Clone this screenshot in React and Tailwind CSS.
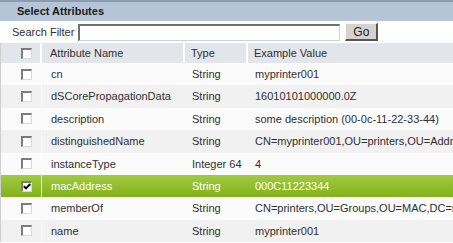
import React from "react";

const rows = [
  ["cn", "String", "myprinter001"],
  ["dSCorePropagationData", "String", "16010101000000.0Z"],
  ["description", "String", "some description (00-0c-11-22-33-44)"],
  ["distinguishedName", "String", "CN=myprinter001,OU=printers,OU=Addresses,DC=example,DC=com"],
  ["instanceType", "Integer 64", "4"],
  ["macAddress", "String", "000C11223344"],
  ["memberOf", "String", "CN=printers,OU=Groups,OU=MAC,DC=sample,DC=com"],
  ["name", "String", "myprinter001"],
];

function Box({ checked }) {
  return (
    <div className="w-[11px] h-[11px] bg-white border-t-2 border-l-2 border-t-[#7c7c7c] border-l-[#7c7c7c] border-r border-b border-r-[#d8d8d8] border-b-[#d8d8d8] flex items-center justify-center">
      {checked && (
        <svg width="8" height="7" viewBox="0 0 8 7">
          <path d="M0.8 3.2 L3 5.4 L7.2 1" stroke="#000" strokeWidth="2" fill="none" />
        </svg>
      )}
    </div>
  );
}

export default function App() {
  return (
    <div className="w-[453px] h-[243px] overflow-hidden bg-white font-['Liberation_Sans',Arial,sans-serif] text-[11px] text-[#303030]">
      <div className="h-[21px] border-t-2 border-[#8d9cad] bg-[#b5c5d7] flex items-center pl-[17px] font-bold text-[11px] text-[#1a1a1a]">
        Select Attributes
      </div>
      <div className="h-[22px] flex items-center pl-[12px]">
        <span>Search Filter</span>
        <div className="ml-[4px] w-[262px] h-[17px] bg-white border-t-2 border-l-2 border-t-[#6f6f6f] border-l-[#6f6f6f] border-r border-b border-r-[#d0d0d0] border-b-[#d0d0d0]" />
        <div className="ml-[5px] w-[33px] h-[18px] bg-[#d6d3ce] border-t border-l border-t-[#f4f4f4] border-l-[#f4f4f4] border-r-2 border-b-2 border-r-[#555] border-b-[#555] flex items-center justify-center text-[12px] text-[#222]">
          Go
        </div>
      </div>
      <div className="border-l border-[#cfcfcf]">
        <div className="h-[20px] grid grid-cols-[41px_143px_63px_1fr] bg-[#e2e6ea]">
          <div className="flex items-center pl-[20px] border-r-2 border-white">
            <Box />
          </div>
          <div className="flex items-center pl-[8px] border-r-2 border-white">Attribute Name</div>
          <div className="flex items-center pl-[6px] border-r-2 border-white">Type</div>
          <div className="flex items-center pl-[6px]">Example Value</div>
        </div>
        {rows.map(([n, t, v], i) => {
          const sel = n === "macAddress";
          const bg = sel
            ? "bg-gradient-to-b from-[#a2ca40] to-[#84b01b] text-white"
            : i % 2 === 0
            ? "bg-[#fbfbfb]"
            : "bg-[#f1f1f1]";
          return (
            <div
              key={n}
              className={`h-[22.4px] grid grid-cols-[41px_143px_63px_1fr] whitespace-nowrap overflow-hidden ${bg}`}
            >
              <div className="flex items-center pl-[20px] border-r border-white/70">
                <Box checked={sel} />
              </div>
              <div className="flex items-center pl-[9px]">{n}</div>
              <div className="flex items-center pl-[7px]">{t}</div>
              <div className="flex items-center pl-[7px] overflow-hidden">{v}</div>
            </div>
          );
        })}
      </div>
    </div>
  );
}
